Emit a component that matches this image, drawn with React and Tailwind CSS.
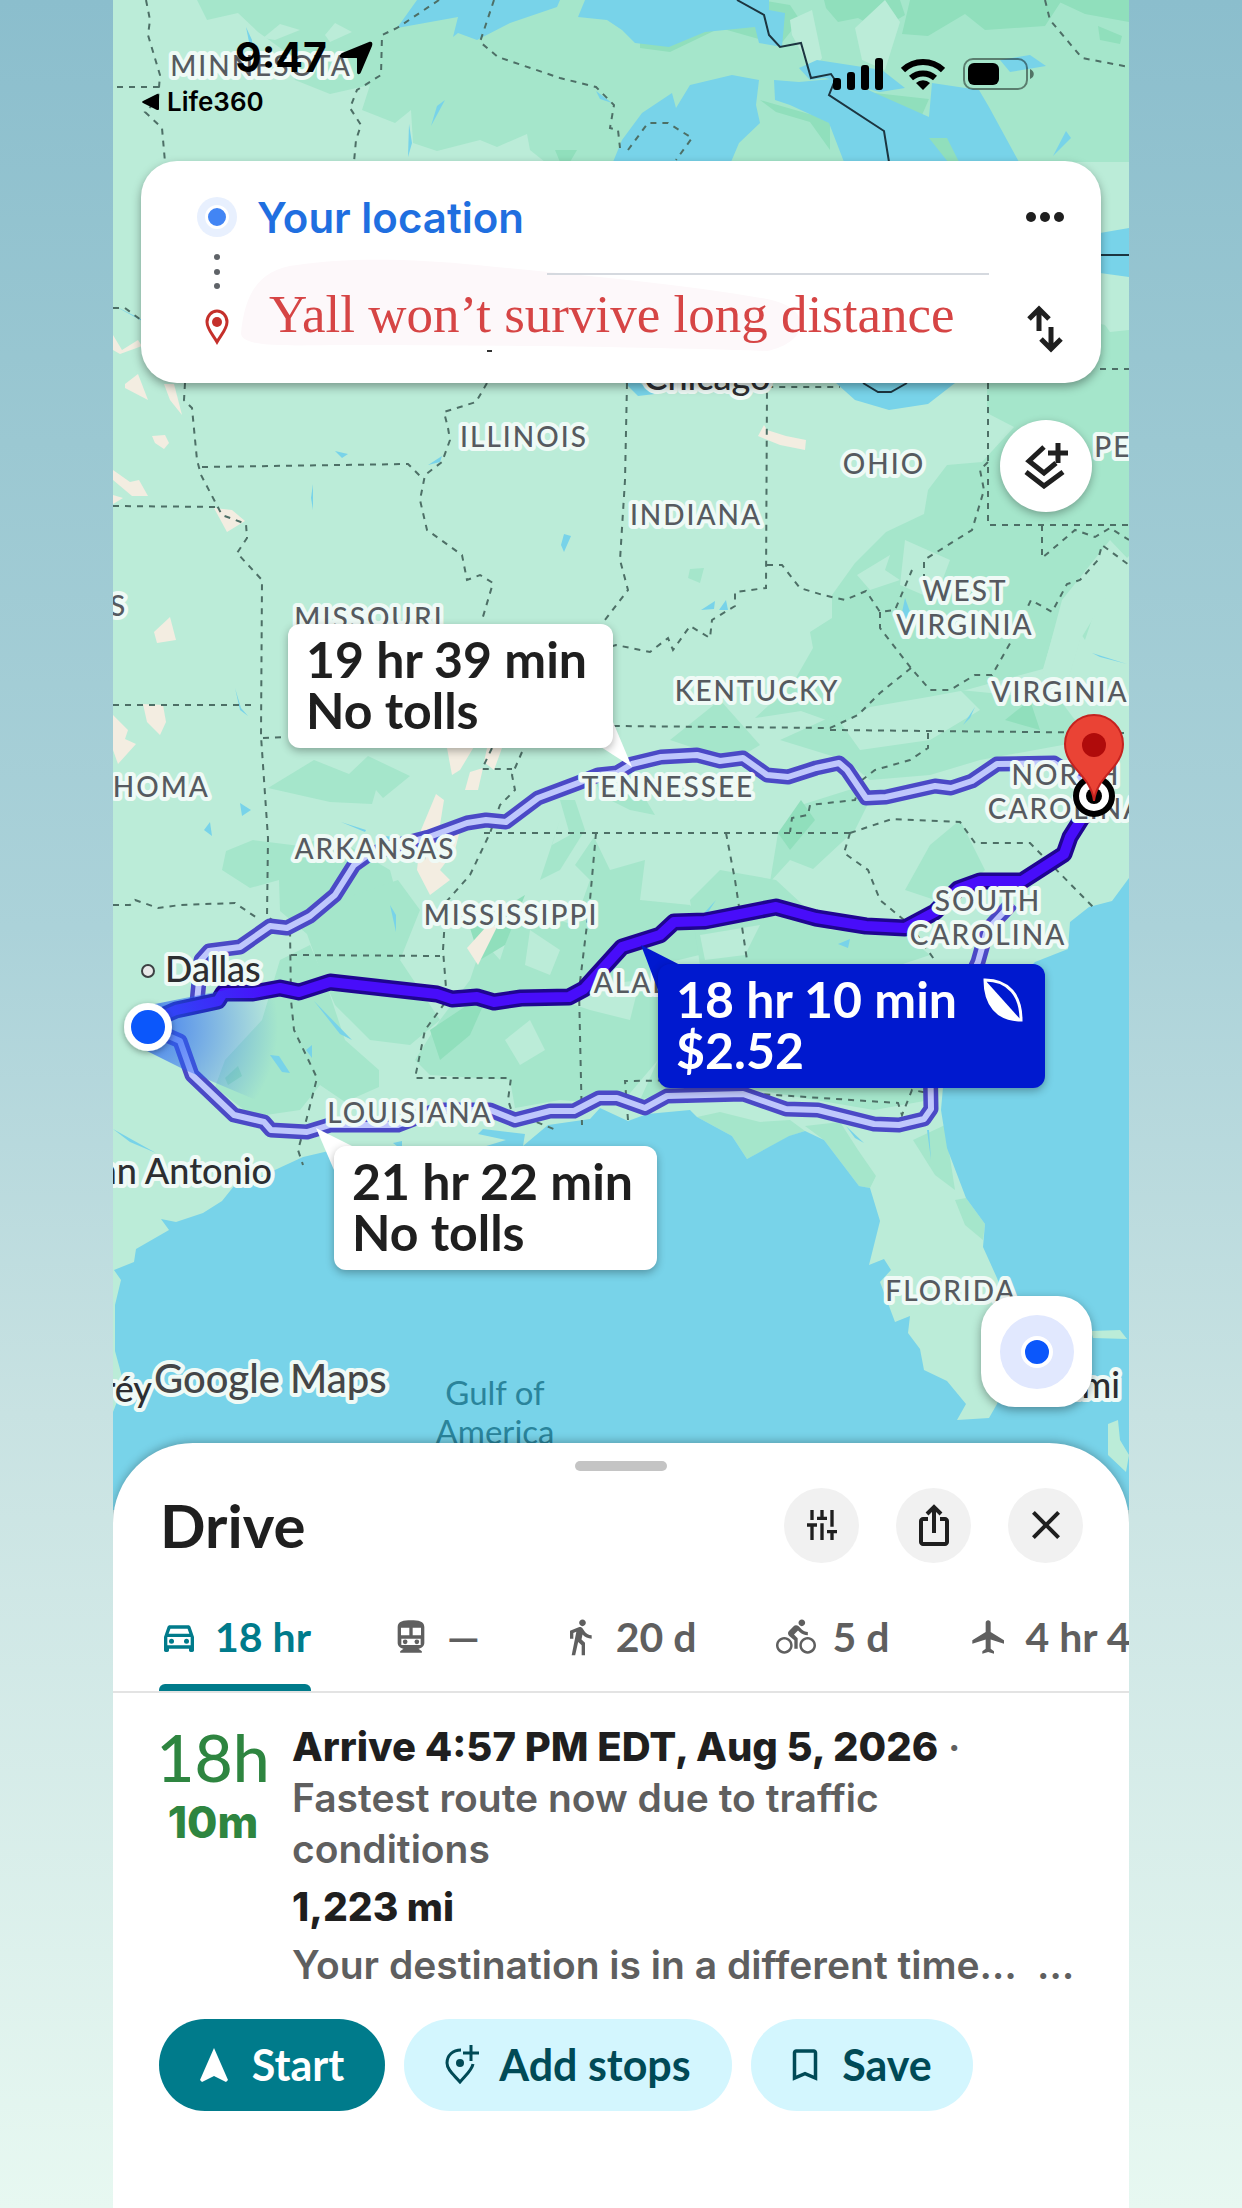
import {
  MdClose,
  MdDirectionsBike,
  MdDirectionsWalk,
  MdFlight,
  MdOutlineBookmarkBorder,
  MdOutlineDirectionsCar,
  MdTune,
} from "react-icons/md";

const FOREST = [
  "197,0 207,20 238,13 258,32 290,55 295,80 330,94 370,85 362,110 395,123 411,110 413,143 437,151 480,140 497,147 527,134 530,150 545,162 1129,162 1129,0",
  "987,300 1129,330 1129,556 1105,580 1085,640 1062,605 1043,669 966,690 928,697 870,707 840,725 801,711 755,718 793,683 813,648 810,632 832,618 832,595 855,563 886,532 924,514 928,490 947,465 982,462 1014,427 987,413 987,383",
  "268,788 314,760 349,774 368,756 410,776 383,798 376,790 372,804 330,802",
  "226,851 253,840 300,846 330,835 390,870 398,900 380,925 368,930 340,940 307,934 280,911 279,880 250,888 222,870",
  "280,960 310,945 325,980 345,1040 379,1070 379,1087 345,1102 320,1085 300,1110 253,1117 215,1087 225,1060 262,1020",
  "340,900 398,880 420,910 400,960 440,1020 410,1045 370,1040 335,1005 320,970 307,934",
  "430,1075 415,1060 440,1020 470,980 483,941 500,960 517,907 574,925 590,880 575,865 594,837 610,870 645,860 640,900 690,905 720,950 658,965 658,1060 620,1105 560,1100 515,1108 510,1080",
  "600,795 592,770 640,790 655,815 630,810",
  "540,880 560,820 552,845 570,835 560,800 575,800 585,830 560,870",
  "690,900 720,870 776,880 830,930 905,935 930,955 900,965 700,965",
  "770,882 778,833 801,805 855,788 870,800 855,830 813,869 790,860",
  "905,890 930,845 960,820 985,870 950,905",
  "670,740 720,700 760,745 740,757 700,750",
  "780,740 835,715 860,750 930,740 980,710 960,690 1060,700 1090,740 980,760 930,775 870,780 845,760",
  "697,1117 732,1136 747,1159 790,1136 805,1131 790,1120 760,1122 720,1112",
  "805,1126 840,1122 858,1150 876,1176 870,1188 859,1186 824,1140",
  "913,1140 945,1125 955,1190 935,1175",
  "955,1200 966,1198 985,1224 983,1240 965,1225",
  "658,1060 930,1060 930,1100 874,1110 786,1095 700,1080 640,1100",
  "700,583 704,568 690,569 688,578",
];

const DEEP_FOREST = [
  "640,0 760,0 790,5 800,20 780,45 720,28 670,52 640,48",
  "824,0 900,0 905,15 880,30 858,18 838,22 826,8",
  "910,0 1062,0 1045,26 985,30 965,14 928,36 902,34",
  "1055,0 1129,0 1129,22 1085,14",
  "760,100 830,120 830,150 810,122 776,112",
  "875,93 929,99 922,115 880,105",
  "555,150 577,150 570,162 560,162",
  "778,833 801,800 815,820 790,850",
  "430,1030 490,990 470,1035 440,1060",
  "1098,26 1122,36 1120,44 1100,40",
  "225,1078 238,1066 242,1076 228,1085",
  "470,928 525,895 505,945 480,960",
  "1005,720 1030,700 1040,730",
];

const LIGHT_LAND = [
  "790,20 812,10 822,58 812,72 792,35",
  "855,28 885,0 900,22 885,70 862,60",
  "1100,205 1129,198 1129,230 1100,233",
  "1100,277 1129,280 1129,330 1110,332 1100,318",
  "263,38 280,24 300,30 275,40",
  "325,35 335,23 352,32 330,42",
  "857,575 890,555 885,570 900,580 870,590",
  "900,585 935,600 950,560 905,540",
  "1038,690 1062,600 1110,540 1129,560 1080,640 1062,700",
  "560,1000 600,985 640,980 630,1020 590,1010",
  "505,1040 530,1020 545,1050 520,1065",
  "530,930 560,950 550,975 525,965",
  "700,935 760,925 745,955 705,960",
];

const DESERT = [
  "113,335 122,350 138,340 142,346 120,354 113,350",
  "125,384 138,374 148,400 125,388",
  "164,384 174,384 182,415 170,400",
  "152,436 165,435 169,443 164,449 155,443",
  "113,470 130,482 139,480 148,496 132,496 113,480",
  "113,495 123,498 113,504",
  "214,508 232,510 245,521 227,532",
  "154,632 170,617 176,640 157,643",
  "143,704 163,705 166,722 160,735 147,722",
  "113,715 128,730 125,739 136,744 118,764 113,750",
  "447,748 475,745 460,770 452,775",
  "487,748 502,748 494,770 484,762",
  "470,772 483,768 478,790 465,790",
  "421,830 436,794 444,800 440,825 460,830 455,850 440,870 450,880 430,895 417,870",
  "467,948 485,928 498,925 478,965",
  "764,425 767,430 786,436 806,440 805,450 780,445 758,436",
  "1100,1452 1110,1436 1129,1475 1129,1500",
];

const WATER = [
  "397,28 417,0 560,0 557,7 510,23 477,40 458,33 453,37 458,17",
  "578,17 585,0 769,0 769,10 785,13 782,47 759,43 755,27 705,32 669,47 635,43 622,30 607,20",
  "613,162 622,140 642,113 672,93 676,108 690,85 732,75 759,80 756,105 760,123 739,143 731,162",
  "774,80 799,82 842,78 875,93 929,117 932,83 979,90 989,107 1019,162 844,162 829,123 790,105 775,100",
  "799,68 817,60 882,70 905,88 880,92 825,78 810,80",
  "1100,233 1129,228 1129,277 1100,273",
  "1000,60 1030,55 1046,66 1010,72",
  "836,383 855,400 889,410 928,404 955,383",
  "625,383 640,383 655,394 638,396",
  "1053,156 1066,131 1071,138",
  "408,157 409,124 412,143",
  "431,126 437,106 445,100",
  "246,27 252,40 253,62",
  "596,91 612,103 600,99",
  "311,498 313,484 313,510",
  "335,451 348,454 342,458",
  "428,465 442,456 440,462",
  "564,552 571,536 564,534 561,545",
  "235,688 241,708 248,716 240,710",
  "240,803 251,810 242,816",
  "204,830 210,822 212,836",
  "341,822 366,830 365,832",
  "376,835 394,837 385,841",
  "425,860 430,838 424,830",
  "701,610 715,601 714,609",
  "719,610 726,600 728,610",
  "900,622 905,598 913,620 910,628",
  "963,725 975,707 970,718",
  "1092,653 1127,664 1100,657",
  "390,905 396,915 396,932",
  "314,1001 352,1040 340,1034",
  "270,1055 279,1056 290,1073 282,1072",
  "306,1050 312,1045 312,1058",
  "703,920 716,900 705,912",
  "838,944 850,939 848,948",
  "113,1129 156,1153 130,1142",
  "393,1143 402,1141 402,1150",
  "846,1126 864,1143 855,1138",
  "929,1130 931,1160 927,1130",
  "140,320 142,320 139,318 113,305 142,321",
];

const GULF =
  "113,1412 124,1384 115,1351 115,1305 121,1280 114,1270 134,1262 136,1249 169,1230 161,1219 176,1222 203,1213 222,1201 234,1186 264,1175 303,1157 333,1150 483,1147 506,1140 478,1134 483,1129 525,1134 523,1146 548,1125 590,1119 600,1108 628,1121 647,1114 690,1110 697,1117 732,1136 747,1159 789,1136 805,1131 824,1140 859,1186 870,1188 880,1221 869,1265 884,1259 891,1270 880,1282 895,1322 910,1316 908,1333 920,1349 924,1370 947,1381 966,1404 957,1420 989,1418 997,1404 1008,1377 1020,1339 997,1278 983,1247 985,1224 966,1198 947,1148 941,1110 943,1087 960,1040 1035,962 1068,949 1070,922 1089,907 1112,901 1129,878 1129,1510 113,1510";

const ISLANDS = [
  "1091,1331 1120,1330 1127,1339 1093,1338",
  "1108,1424 1118,1420 1120,1440 1129,1455 1126,1472 1108,1455",
];

const BORDERS = [
  "146,0 150,20 148,35 160,75 158,100 145,112 162,128 165,162",
  "117,87 159,87",
  "439,0 397,28 382,35 381,75 357,90 350,108 361,125 356,140 354,162",
  "494,0 480,42 498,57 560,78 596,87 614,105 610,128 618,130 620,148",
  "628,150 648,123 668,123 692,138 676,160",
  "1045,0 1050,20 1082,58 1129,67",
  "1100,369 1129,369",
  "113,308 125,308 141,320",
  "185,383 184,400 192,408 197,460 201,475 222,515 246,524 247,538 237,553 262,580 261,736 268,838 267,917 290,930 291,1000 294,1030 317,1078 305,1125 298,1150 303,1165",
  "202,467 408,464 422,478",
  "113,506 220,507",
  "487,383 476,402 444,412 448,428 450,440 442,462 425,475 420,500 427,530 462,555 467,580 480,575 493,583 482,620",
  "627,383 625,480 620,560 628,590 605,620 600,650 616,645 650,652 668,638 673,650 690,626 710,638 712,620 735,606 735,592 766,588 767,387 840,387",
  "767,565 782,565 800,588 823,595 845,600 866,591 880,612 895,610 912,570",
  "880,612 880,628 911,668 930,690 950,690 975,675 992,675 1012,640 1031,600 1052,612 1067,584 1080,580 1098,560 1102,545 1129,565",
  "988,383 988,525 1129,525",
  "988,462 980,470 984,490 972,530 924,560 924,578",
  "1042,525 1042,558 1075,530 1095,537 1110,528 1129,540",
  "911,668 880,693 858,715 830,728 614,726",
  "830,730 1129,733",
  "928,733 928,748 910,760 875,770 862,780 855,800 810,805 808,815 792,818 790,832",
  "113,705 257,705",
  "263,738 285,737",
  "484,833 850,833",
  "522,752 512,775 515,790 500,805 490,833 470,875 446,902 443,950 447,1000 425,1030 415,1078 511,1078 508,1100 512,1112 556,1130",
  "492,748 482,769 512,769",
  "596,833 590,900 579,990 582,1125",
  "726,833 735,880 747,960",
  "850,833 892,819 960,822 975,843 1030,843 1093,907",
  "850,833 844,853 868,870 880,900 910,925 936,962",
  "291,955 440,956",
  "113,905 130,905 135,900 158,908 180,905 235,903 260,920",
  "628,1120 625,1081 700,1080 760,1094 898,1103 902,1115 912,1090 940,1095",
];

const FRONTIER = [
  "737,0 764,15 769,35 780,47 801,43 811,78 831,74 835,80 829,95 884,131 889,162",
  "1100,255 1129,255",
  "863,383 878,392 891,392 907,383",
];

const ALT_ROUTES = [
  "197,1002 201,960 209,951 240,947 270,926 287,928 310,916 335,895 354,865 368,855 391,847 429,837 467,823 486,820 506,822 538,798 578,783 598,775 617,773 632,764 661,757 697,755 720,761 743,758 767,775 788,777 816,768 839,763 847,770 866,798 886,797 935,786 951,788 972,781 997,764 1054,763 1080,780",
  "148,1027 180,1041 192,1075 234,1115 264,1122 271,1130 307,1132 330,1125 398,1125 437,1110 490,1110 515,1120 550,1111 574,1111 599,1098 617,1098 645,1108 667,1096 743,1094 786,1109 818,1110 874,1124 899,1125 924,1119 931,1109 930,1050 965,990 978,962 987,930 1012,903",
];

const MAIN_ROUTE =
  "148,1022 176,1010 218,1001 223,993 253,993 280,988 299,992 330,982 437,994 452,999 477,997 494,1002 521,998 569,997 584,989 622,947 660,935 674,922 705,921 776,907 816,918 866,926 905,928 935,912 958,889 980,881 1022,881 1064,854 1070,837 1082,818 1093,797";

const STATES = [
  { name: "MINNESOTA", x: 261, y: 76 },
  { name: "ILLINOIS", x: 524, y: 447 },
  { name: "INDIANA", x: 696, y: 525 },
  { name: "OHIO", x: 884, y: 474 },
  { name: "WEST", x: 965, y: 601 },
  { name: "VIRGINIA", x: 965, y: 635 },
  { name: "KENTUCKY", x: 757, y: 701 },
  { name: "VIRGINIA", x: 1060, y: 702 },
  { name: "TENNESSEE", x: 668, y: 797 },
  { name: "NORTH", x: 1066, y: 785 },
  { name: "CAROLINA", x: 1066, y: 819 },
  { name: "ARKANSAS", x: 375, y: 859 },
  { name: "MISSISSIPPI", x: 511, y: 925 },
  { name: "MISSOURI", x: 369, y: 628 },
  { name: "OKLAHOMA", x: 120, y: 797 },
  { name: "KANSAS", x: 67, y: 616 },
  { name: "SOUTH", x: 988, y: 911 },
  { name: "CAROLINA", x: 988, y: 945 },
  { name: "ALABAMA", x: 668, y: 993 },
  { name: "LOUISIANA", x: 410, y: 1123 },
  { name: "FLORIDA", x: 951, y: 1301 },
  { name: "PENNSYLVANIA", x: 1209, y: 457 },
];

const CITIES = [
  { name: "Dallas", x: 165, y: 982, anchor: "start" },
  { name: "San Antonio", x: 272, y: 1184, anchor: "end" },
  { name: "Monterréy", x: 152, y: 1402, anchor: "end" },
  { name: "Miami", x: 1120, y: 1398, anchor: "end" },
  { name: "Chicago", x: 707, y: 390, anchor: "middle" },
];

const MODES = [
  { id: "drive", label: "18 hr", icon: MdOutlineDirectionsCar, active: true },
  { id: "transit", label: "—", icon: TrainIcon },
  { id: "walk", label: "20 d", icon: MdDirectionsWalk },
  { id: "bike", label: "5 d", icon: MdDirectionsBike },
  { id: "flight", label: "4 hr 40", icon: MdFlight },
];

function TrainIcon({ size }) {
  return (
    <svg width={size} height={size} viewBox="0 0 24 24" fill="currentColor">
      <path
        fillRule="evenodd"
        d="M12 2C7.600 2 4 2.500 4 6v9.500C4 17.400 5.600 19 7.500 19L5.500 20.500V21.500h13v-1L16.500 19c1.900 0 3.500-1.600 3.500-3.500V6c0-3.500-3.600-4-8-4ZM6 6.500h5V11H6Zm7 0h5V11h-5ZM6.200 13h11.600v3.800H6.200Z"
      />
      <circle cx="8.500" cy="14.900" r="1.400" />
      <circle cx="15.500" cy="14.900" r="1.400" />
    </svg>
  );
}

function Shapes({ list, fill }) {
  return (
    <g fill={fill}>
      {list.map((points) => (
        <polygon key={points} points={points} />
      ))}
    </g>
  );
}

function RouteMap() {
  return (
    <svg
      className="absolute inset-0 h-full w-full"
      viewBox="113 0 1016 1510"
      preserveAspectRatio="xMidYMin slice"
      fill="none"
      aria-label="Route map"
    >
      <defs>
        <radialGradient id="beam" gradientUnits="userSpaceOnUse" cx="148" cy="1027" r="130">
          <stop offset="0" stopColor="#2563f5" stopOpacity="0.8" />
          <stop offset="1" stopColor="#2563f5" stopOpacity="0" />
        </radialGradient>
        <filter id="lift" x="-20%" y="-20%" width="140%" height="140%">
          <feDropShadow dx="0" dy="2" stdDeviation="3" floodOpacity="0.35" />
        </filter>
      </defs>

      <rect x="113" width="1016" height="1510" fill="#bbecd8" />
      <Shapes list={FOREST} fill="#a5e6cb" />
      <Shapes list={DEEP_FOREST} fill="#90dfbc" />
      <Shapes list={LIGHT_LAND} fill="#bbecd8" />
      <Shapes list={DESERT} fill="#f3ede1" />
      <Shapes list={WATER} fill="#78d3e9" />
      <polygon points="929,138 947,138 959,162 948,162" fill="#90dfbc" />
      <polygon points={GULF} fill="#78d3e9" />
      <Shapes list={ISLANDS} fill="#bbecd8" />

      <g stroke="#4d6f66" strokeWidth="2" strokeDasharray="6 6">
        {BORDERS.map((points) => (
          <polyline key={points} points={points} />
        ))}
      </g>
      <g stroke="#1c3540" strokeWidth="2">
        {FRONTIER.map((points) => (
          <polyline key={points} points={points} />
        ))}
      </g>

      {/* Routes */}
      <g strokeLinejoin="round">
        {ALT_ROUTES.map((points) => (
          <g key={points}>
            <polyline points={points} stroke="#4b49c6" strokeWidth="15" />
            <polyline points={points} stroke="#bfc7fc" strokeWidth="6" />
          </g>
        ))}
        <polyline points={MAIN_ROUTE} stroke="#1f0590" strokeWidth="17" />
        <polyline points={MAIN_ROUTE} stroke="#480dfa" strokeWidth="10" />
      </g>
      <polygon points="135,1045 185,1070 280,1110 300,975 150,1005" fill="url(#beam)" />

      {/* Labels */}
      <g
        className="font-['Lato','Open_Sans',sans-serif] text-[28px] font-medium tracking-[2px]"
        fill="#565a60"
        stroke="#effaf6"
        strokeWidth="8"
        strokeLinejoin="round"
        paintOrder="stroke"
        textAnchor="middle"
      >
        {STATES.map(({ name, x, y }) => (
          <text key={name + y} x={x} y={y}>
            {name}
          </text>
        ))}
      </g>
      <g
        className="font-['Lato','Open_Sans',sans-serif] text-[36px] font-medium"
        fill="#2c2e31"
        stroke="#effaf6"
        strokeWidth="8"
        strokeLinejoin="round"
        paintOrder="stroke"
      >
        {CITIES.map(({ name, x, y, anchor }) => (
          <text key={name} x={x} y={y} textAnchor={anchor}>
            {name}
          </text>
        ))}
        <text className="text-[40px]" x="154" y="1393" fill="#444648">
          Google Maps
        </text>
      </g>
      <g
        className="font-['Lato','Open_Sans',sans-serif] text-[33px]"
        fill="#2a849b"
        textAnchor="middle"
      >
        <text x="495" y="1405">Gulf of</text>
        <text x="495" y="1444">America</text>
      </g>
      <circle cx="148" cy="971" r="6" fill="#e8e8e8" stroke="#3c4043" strokeWidth="2" />

      {/* Callout tails */}
      <polygon points="590,740 613,722 632,767" fill="#fff" />
      <polygon points="316,1128 360,1150 334,1170" fill="#fff" />
      <polygon points="641,945 690,970 658,990" fill="#0019cf" />

      {/* Start and destination */}
      <g filter="url(#lift)">
        <circle cx="148" cy="1027" r="24" fill="#fff" />
      </g>
      <circle cx="148" cy="1027" r="17" fill="#0b57fb" />
      <circle cx="1094" cy="796" r="18" fill="#fff" stroke="#000" strokeWidth="6" />
      <circle cx="1094" cy="796" r="8" fill="#000" />
      <path
        d="M1094 801c-3-26-29-33-29-57a29 29 0 0 1 58 0c0 24-26 31-29 57Z"
        fill="#ea4335"
        stroke="#c5221f"
        strokeWidth="2"
      />
      <circle cx="1094" cy="745" r="12" fill="#b00b0b" />
    </svg>
  );
}

function StatusBar() {
  return (
    <header className="relative flex h-[161px] items-start justify-between pl-7 pr-[94px] pt-[33px] text-black">
      <div className="font-['Inter',sans-serif]">
        <div className="flex h-[49px] items-center gap-3 pl-[94px]">
          <time className="text-[41px] font-bold">9:47</time>
          <svg width="34" height="34" viewBox="0 0 34 34" aria-hidden="true">
            <path d="M30 1c3-1 4 1 3 4L22 31c-1 3-4 3-4 0V18c0-1 0-1-1-1H4c-4 0-4-3-1-5Z" />
          </svg>
        </div>
        <a href="#life360" className="flex items-center gap-2 text-[26px] font-semibold">
          <svg width="18" height="18" viewBox="0 0 18 18" aria-hidden="true">
            <path d="M2 8 16 1c1 0 2 0 2 1v14c0 1-1 1-2 1L2 10c-1 0-1-2 0-2Z" />
          </svg>
          Life360
        </a>
      </div>
      <div className="flex items-center gap-[18px] pt-[25px]">
        <svg width="50" height="32" viewBox="0 0 50 32" aria-label="Signal">
          <rect y="20" width="8" height="12" rx="3" />
          <rect x="14" y="14" width="8" height="18" rx="3" />
          <rect x="28" y="7" width="8" height="25" rx="3" />
          <rect x="42" width="8" height="32" rx="3" />
        </svg>
        <svg width="44" height="32" viewBox="0 0 44 32" aria-label="Wi-Fi">
          <g fill="none" stroke="#000" strokeWidth="6">
            <path d="M2 12a29 29 0 0 1 40 0" />
            <path d="M10 20a18 18 0 0 1 24 0" />
          </g>
          <path d="M22 32l-7-7a10 10 0 0 1 14 0Z" />
        </svg>
        <svg width="72" height="32" viewBox="0 0 72 32" aria-label="Battery">
          <rect x="1" y="1" width="63" height="30" rx="9" fill="none" stroke="#000" strokeOpacity=".45" strokeWidth="2" />
          <rect x="5" y="5" width="31" height="22" rx="6" />
          <path d="M67 11c5 2 5 8 0 10Z" fillOpacity=".5" />
        </svg>
      </div>
    </header>
  );
}

function SearchCard() {
  return (
    <section className="relative mx-7 flex h-[222px] rounded-[36px] bg-white pl-14 pr-8 pt-6 shadow-[0_4px_10px_rgba(0,0,0,0.35)]">
      <div className="flex w-10 flex-col items-center">
        <span className="mt-3 flex size-10 items-center justify-center rounded-full bg-[#e8f0fe]">
          <span className="size-6 rounded-full border-3 border-white bg-[#4285f4]" />
        </span>
        <svg className="mt-4" width="6" height="36" viewBox="0 0 6 36" fill="#5f6368" aria-hidden="true">
          <circle cx="3" cy="4" r="3" />
          <circle cx="3" cy="19" r="3" />
          <circle cx="3" cy="33" r="3" />
        </svg>
        <svg className="mt-5" width="26" height="36" viewBox="0 0 26 36" aria-hidden="true">
          <path
            d="M13 33C9 26 3 20 3 13a10 11 0 0 1 20 0c0 7-6 13-10 20Z"
            fill="none"
            stroke="#c5302b"
            strokeWidth="3"
          />
          <circle cx="13" cy="13" r="5" fill="#c5302b" />
        </svg>
      </div>

      <div className="relative ml-5 flex-1">
        {/* Scribble behind the destination */}
        <svg className="absolute -left-5 top-[74px]" width="580" height="95" viewBox="0 0 580 95" aria-hidden="true">
          <path
            d="M4 74C8 34 22 10 60 6c50-8 120-6 180 0 100 10 200 18 290 34 50 10 40 44 0 52-120-4-280-6-420-6C60 86 4 90 4 74Z"
            fill="#fdf8fa"
          />
          <rect x="250" y="91" width="5" height="2" fill="#333" />
        </svg>
        <input
          aria-label="Start"
          defaultValue="Your location"
          className="relative block h-16 w-full bg-transparent font-['Inter',sans-serif] text-[42px] font-semibold text-[#1f6fe0] outline-none"
        />
        <div className="relative ml-[290px] mr-8 mt-6 h-0.5 bg-[#d5d9df]" />
        <input
          aria-label="Destination"
          defaultValue="Yall won’t survive long distance"
          className="relative mt-2 block h-16 w-full bg-transparent pl-3 font-['Liberation_Serif',serif] text-[53px] text-[#d64545] outline-none"
        />
      </div>

      <div className="flex w-12 flex-col items-center">
        <button aria-label="More" className="mt-2 flex h-12 w-12 items-center justify-center">
          <svg width="38" height="10" viewBox="0 0 38 10" fill="#1f1f1f">
            <circle cx="5" cy="5" r="5" />
            <circle cx="19" cy="5" r="5" />
            <circle cx="33" cy="5" r="5" />
          </svg>
        </button>
        <button aria-label="Swap" className="mt-16 flex h-12 w-12 items-center justify-center">
          <svg width="36" height="48" viewBox="0 0 36 48" fill="none" stroke="#1f1f1f" strokeWidth="5">
            <path d="M12 26V5M2 14 12 4l10 10" />
            <path d="M24 22v21M14 34l10 10 10-10" />
          </svg>
        </button>
      </div>
    </section>
  );
}

function Callouts() {
  const base =
    "absolute h-[124px] rounded-xl px-[18px] py-[10px] text-[50px] leading-[51px] font-bold whitespace-nowrap shadow-[0_3px_8px_rgba(0,0,0,0.3)]";
  return (
    <div className="font-['Lato','Open_Sans',sans-serif]">
      <div className={`${base} left-[175px] top-[624px] w-[325px] bg-white text-[#1f1f1f]`}>
        19 hr 39 min
        <br />
        No tolls
      </div>
      <div className={`${base} left-[221px] top-[1146px] w-[323px] bg-white text-[#1f1f1f]`}>
        21 hr 22 min
        <br />
        No tolls
      </div>
      <div className={`${base} left-[545px] top-[964px] flex w-[387px] justify-between bg-[#0019cf] text-white`}>
        <div>
          18 hr 10 min
          <br />
          $2.52
        </div>
        <svg className="mr-1 mt-1" width="40" height="44" viewBox="0 0 40 44" aria-hidden="true">
          <path d="M2 2c24 0 36 16 36 40C14 42 2 26 2 2Z" fill="none" stroke="#fff" strokeWidth="3" />
          <path d="M2 2 38 42C14 42 2 26 2 2Z" fill="#fff" />
        </svg>
      </div>
    </div>
  );
}

function MapButtons() {
  return (
    <>
      <button
        aria-label="Layers"
        className="absolute right-[37px] top-[420px] flex size-[92px] items-center justify-center rounded-full bg-white shadow-[0_3px_8px_rgba(0,0,0,0.3)]"
      >
        <svg width="44" height="46" viewBox="0 0 44 46" fill="none" stroke="#1f1f1f" strokeWidth="5">
          <path d="M20 4 5 18l15 12 12-10" />
          <path d="M2 29l18 14 19-14" />
          <path d="M34 0v20M24 10h20" />
        </svg>
      </button>
      <button
        aria-label="Recenter"
        className="absolute right-[37px] top-[1296px] flex size-[111px] items-center justify-center rounded-[34px] bg-white shadow-[0_3px_10px_rgba(0,0,0,0.35)]"
      >
        <span className="flex size-[74px] items-center justify-center rounded-full bg-[#e1e8fe]">
          <span className="size-8 rounded-full border-4 border-white bg-[#0b57fb]" />
        </span>
      </button>
    </>
  );
}

function RouteSheet() {
  const round = "flex size-[75px] items-center justify-center rounded-full bg-[#f1f1f1] text-[#1f1f1f]";
  return (
    <section className="relative -mt-[67px] flex-1 rounded-t-[80px] bg-white pt-[18px] shadow-[0_-2px_8px_rgba(0,0,0,0.25)]">
      <div className="mx-auto h-[10px] w-[92px] rounded-full bg-[#c4c4c4]" />

      <div className="mt-3 flex h-[84px] items-center justify-between pl-[47px] pr-[46px] font-['Lato','Open_Sans',sans-serif]">
        <h1 className="text-[60px] font-bold text-[#1f1f1f]">Drive</h1>
        <div className="flex gap-[37px]">
          <button aria-label="Route options" className={round}>
            <MdTune size={40} className="rotate-90" />
          </button>
          <button aria-label="Share" className={round}>
            <svg width="30" height="42" viewBox="0 0 30 42" fill="none" stroke="currentColor" strokeWidth="4">
              <path d="M9 15H4c-1 0-2 1-2 2v21c0 1 1 2 2 2h22c1 0 2-1 2-2V17c0-1-1-2-2-2h-5" />
              <path d="M15 29V3M8 10l7-7 7 7" />
            </svg>
          </button>
          <button aria-label="Close" className={round}>
            <MdClose size={48} />
          </button>
        </div>
      </div>

      <nav className="mt-6 flex h-[102px] gap-20 overflow-hidden border-b-2 border-[#e3e3e3] pl-[46px] font-['Lato','Open_Sans',sans-serif]">
        {MODES.map(({ id, label, icon: Icon, active }) => (
          <button
            key={id}
            className={`relative flex shrink-0 items-center gap-4 pb-2 text-[41px] font-bold ${
              active ? "text-[#007b8b]" : "text-[#5f5f5f]"
            }`}
          >
            <Icon size={40} />
            {label}
            {active && <span className="absolute inset-x-0 bottom-0 h-[7px] rounded-t-md bg-[#007b8b]" />}
          </button>
        ))}
      </nav>

      <div className="flex gap-[25px] pl-[46px] pt-6 font-['Inter',sans-serif]">
        <div className="flex w-[108px] shrink-0 flex-col items-center text-[#2e8540]">
          <span className="font-['Lato','Open_Sans',sans-serif] text-[66px] leading-[80px] font-medium">18h</span>
          <span className="text-[44px] leading-[51px] font-extrabold">10m</span>
        </div>
        <div className="pt-1 text-[39px] leading-[51px] font-semibold text-[#5f5f5f]">
          <p>
            <strong className="text-[40px] font-extrabold text-[#1f1f1f]">Arrive 4:57 PM EDT, Aug 5, 2026</strong> ·
          </p>
          <p>
            Fastest route now due to traffic
            <br />
            conditions
          </p>
          <p className="mt-[7px] font-extrabold text-[#1f1f1f]">1,223 mi</p>
          <p className="mt-[7px] flex gap-5">
            <span>Your destination is in a different time…</span>
            <span>…</span>
          </p>
        </div>
      </div>

      <div className="mt-[29px] flex gap-[19px] px-[46px] pb-24 font-['Lato','Open_Sans',sans-serif] text-[43px] font-bold">
        <button className="flex h-[92px] w-[226px] items-center justify-center gap-6 rounded-full bg-[#007b8b] text-white">
          <svg width="28" height="34" viewBox="0 0 28 34" fill="currentColor" aria-hidden="true">
            <path d="M14 0 28 32l-2 2-12-6-12 6-2-2Z" />
          </svg>
          Start
        </button>
        <button className="flex h-[92px] w-[328px] items-center justify-center gap-5 rounded-full bg-[#d3f6fe] text-[#004a56]">
          <svg width="34" height="40" viewBox="0 0 34 40" fill="none" stroke="currentColor" strokeWidth="3" aria-hidden="true">
            <path d="M16 5C8 5 2 10 2 18c0 7 7 12 13 19 6-7 12-12 13-18" />
            <path d="M26 0v16M18 8h16" />
            <circle cx="15" cy="18" r="4" fill="currentColor" stroke="none" />
          </svg>
          Add stops
        </button>
        <button className="flex h-[92px] w-[222px] items-center justify-center gap-4 rounded-full bg-[#d3f6fe] pr-2 text-[#004a56]">
          <MdOutlineBookmarkBorder size={42} />
          Save
        </button>
      </div>
    </section>
  );
}

export default function App() {
  return (
    <main className="flex min-h-screen flex-col bg-[linear-gradient(180deg,#8bbecd_0%,#9bc8d2_20%,#abd2d9_42%,#c8e2e2_64%,#e7f8f1_100%)] px-[113px]">
      <div className="flex flex-1 flex-col overflow-hidden">
        <div className="relative h-[1510px]">
          <RouteMap />
          <StatusBar />
          <SearchCard />
          <Callouts />
          <MapButtons />
        </div>
        <RouteSheet />
      </div>
    </main>
  );
}
